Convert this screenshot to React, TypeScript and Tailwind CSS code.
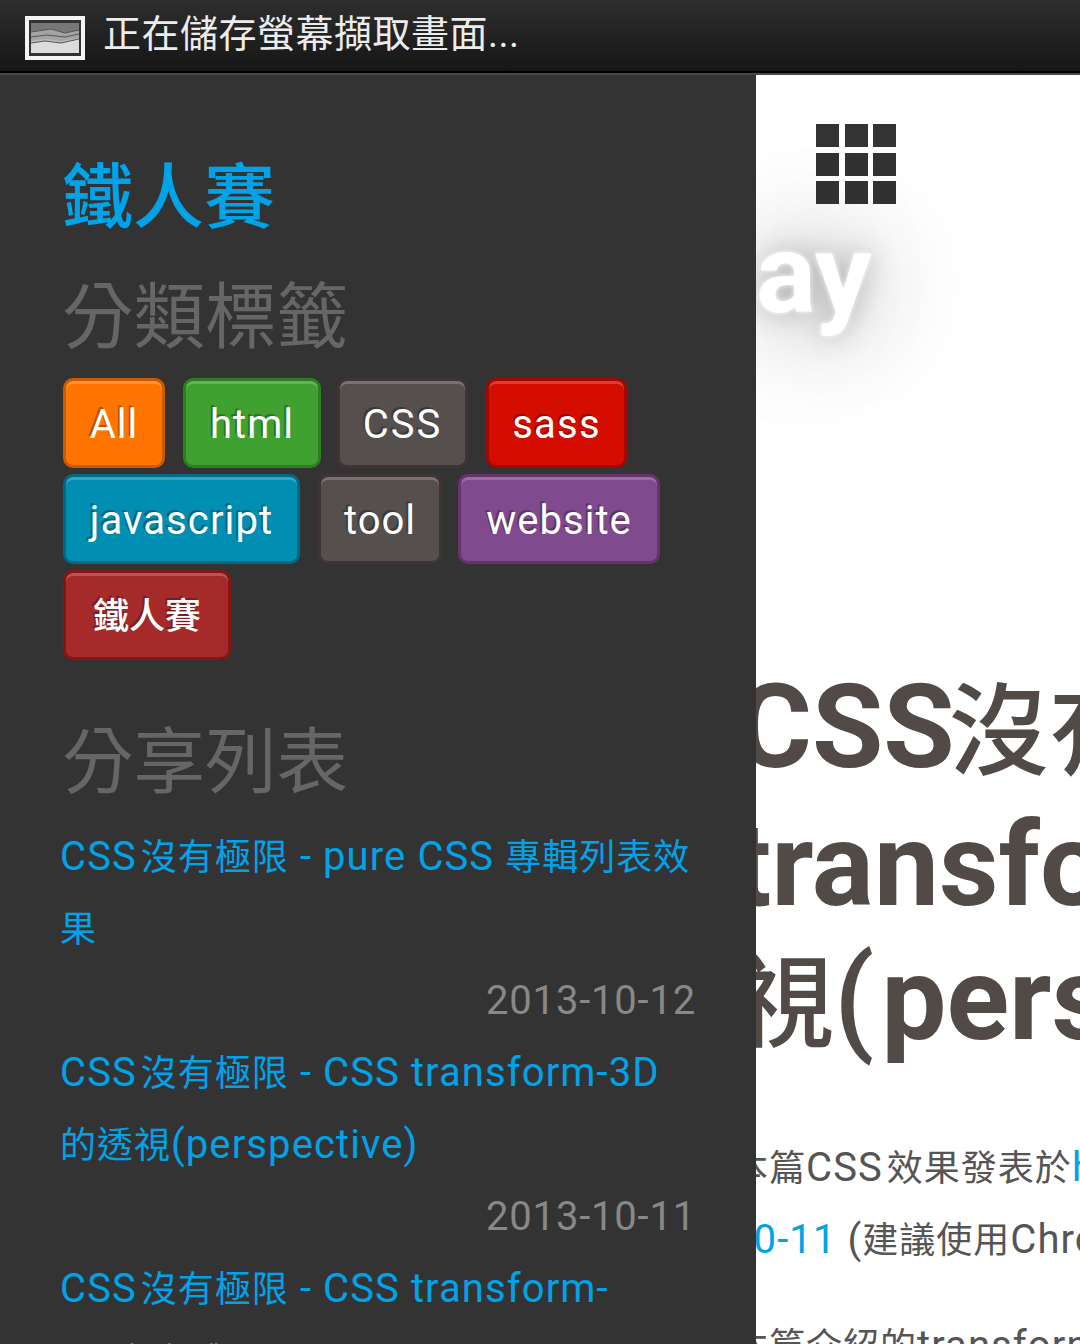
const font = { fontFamily: 'Roboto, "Noto Sans CJK TC", sans-serif' };

const tags = [
  { label: 'All', cls: 'w-[102px] bg-[#ff7500] border-[#c95c00] text-[40px] tracking-[1px]' },
  { label: 'html', cls: 'w-[138px] bg-[#3fa12f] border-[#2c7f1e] text-[40px] tracking-[1px]' },
  { label: 'CSS', cls: '-ml-[2px] w-[131px] bg-[#55504d] border-[#423436] text-[40px] tracking-[2px]' },
  { label: 'sass', cls: 'w-[141px] bg-[#d40d00] border-[#a00800] text-[40px] tracking-[1.2px]' },
  { label: 'javascript', cls: 'w-[237px] bg-[#008fb3] border-[#006a86] text-[40px] tracking-[1.1px]' },
  { label: 'tool', cls: 'w-[124px] bg-[#55504d] border-[#423436] text-[40px] tracking-[1px]' },
  { label: 'website', cls: '-ml-[2px] w-[202px] bg-[#7f4a8e] border-[#68326f] text-[40px] tracking-[1px]' },
  { label: '鐵人賽', cls: 'w-[168px] bg-[#a62a2a] border-[#861515] text-[36px] font-medium' },
];

const posts = [
  { lines: ['CSS沒有極限 - pure CSS 專輯列表效', '果'], date: '2013-10-12' },
  { lines: ['CSS沒有極限 - CSS transform-3D', '的透視(perspective)'], date: '2013-10-11' },
  { lines: ['CSS沒有極限 - CSS transform-', '3D立方體'], date: '' },
];

// Latin and CJK run at different sizes in the screenshot
const Mixed = ({ text, latin, cjk, gap = '' }: { text: string; latin: string; cjk: string; gap?: string }) => {
  const parts = text.split(/([\u3000-\u9fff]+)/);
  return (
    <>
      {parts.map((part, i) => {
        if (i % 2 === 0) {
          return (
            <span key={i} className={latin}>
              {part}
            </span>
          );
        }
        const afterWord = parts[i - 1] !== '' && !parts[i - 1].endsWith(' ');
        return (
          <span key={i} className={`${cjk} ${afterWord ? gap : ''}`}>
            {part}
          </span>
        );
      })}
    </>
  );
};

const StatusIcon = () => (
  <svg width="60" height="44" viewBox="0 0 60 44" className="shrink-0">
    <rect x="0" y="0" width="60" height="44" fill="#f4f4f4" />
    <rect x="4" y="4" width="52" height="36" fill="#333" />
    <rect x="6" y="7" width="48" height="30" fill="#bbb" />
    <path d="M6 7h48v7l-14 3-14-4-20 3z" fill="#777" />
    <path d="M6 16l20-3 14 4 14-3v8l-18 3-16-2-14 2z" fill="#a4a4a4" />
    <path d="M6 27l14-2 16 2 18-4v14H6z" fill="#dcdcdc" />
    <path d="M6 16l20-3 14 4 14-3M6 27l14-2 16 2 18-4M6 21l16-2 18 2 14-3" fill="none" stroke="#555" strokeWidth="1" />
  </svg>
);

const GridIcon = () => (
  <div className="grid w-[80px] grid-cols-3 gap-[5.5px]">
    {Array.from({ length: 9 }).map((_, i) => (
      <div key={i} className="h-[23px] w-[23px] bg-[#333]" />
    ))}
  </div>
);

const latinBody = 'text-[40px] tracking-[1.1px]';
const cjkBody = 'text-[36px] tracking-[1px]';
const latinHead = 'text-[116px]';
const cjkHead = 'text-[100px] font-medium';

export default function App() {
  return (
    <div className="flex h-[1344px] w-[1080px] flex-col overflow-hidden bg-[#333]" style={font}>
      <div className="flex h-[75px] shrink-0 flex-col">
        <div className="flex h-[71px] items-center bg-gradient-to-b from-[#2e2e2e] to-[#161616] pl-[25px]">
          <div className="mt-[5px]">
            <StatusIcon />
          </div>
          <span className="mb-[3px] ml-[18px] whitespace-nowrap text-[38px] leading-none tracking-[0.5px] text-[#ececec]">
            正在儲存螢幕擷取畫面...
          </span>
        </div>
        <div className="h-[2px] bg-black" />
        <div className="h-[2px] bg-[#484848]" />
      </div>

      <div className="flex min-h-0 flex-1">
        <aside className="w-[756px] shrink-0 overflow-hidden pl-[60px] pr-[60px] pt-[75px]">
          <h1 className="ml-[2px] text-[71px] font-medium leading-[96px] text-[#00a2e8]">鐵人賽</h1>
          <h2 className="ml-[2px] mt-[24px] text-[71.5px] font-normal leading-[96px] text-[#666]">分類標籤</h2>
          <div className="ml-[3px] mt-[12px] flex flex-wrap gap-x-[18px] gap-y-[6px]">
            {tags.map((t) => (
              <div
                key={t.label}
                className={`flex h-[90px] items-center justify-center rounded-[10px] border-[3px] pt-[3px] text-white shadow-[inset_0_3px_0_rgba(255,255,255,0.2)] [text-shadow:-2px_-2px_0_rgba(0,0,0,0.3)] ${t.cls}`}
              >
                {t.label}
              </div>
            ))}
          </div>
          <h2 className="ml-[2px] mt-[55px] text-[71.5px] font-normal leading-[96px] text-[#666]">分享列表</h2>
          <div className="mt-[10px] leading-[72px]">
            {posts.map((p, i) => (
              <div key={i}>
                {p.lines.map((l) => (
                  <div key={l} className="h-[72px] whitespace-nowrap text-[#00a2e8]">
                    <Mixed text={l} latin={latinBody} cjk={cjkBody} gap="pl-[4px]" />
                  </div>
                ))}
                {p.date && <div className="h-[72px] text-right text-[40px] tracking-[0.8px] text-[#888]">{p.date}</div>}
              </div>
            ))}
          </div>
        </aside>

        <main className="min-w-0 flex-1 overflow-hidden bg-white pl-[60px] pt-[49px]">
          <GridIcon />
          <div className="-ml-[60px] mt-[10px] h-[120px]">
            <div className="whitespace-nowrap text-[112px] font-bold leading-[120px] text-white [text-shadow:0_0_5px_#fff,0_0_28px_rgba(0,0,0,0.25),0_0_100px_rgba(0,0,0,0.5)]">
              ay
            </div>
          </div>
          <div className="-ml-[60px] mt-[326px] whitespace-nowrap font-bold leading-[134px] text-[#514a46]">
            <div className="-ml-[20px] h-[138px]">
              <Mixed text="CSS" latin={latinHead} cjk={cjkHead} />
              <span className={`${cjkHead} -ml-[6px]`}>沒有極限</span>
            </div>
            <div className="-ml-[24px] h-[134px]">
              <Mixed text="transform" latin={latinHead} cjk={cjkHead} />
            </div>
            <div className="-ml-[22px] h-[134px]">
              <span className={cjkHead}>視</span>
              <span className={`${latinHead} font-medium tracking-[7px]`}>(</span>
              <span className={latinHead}>perspective)</span>
            </div>
          </div>
          <div className="-ml-[60px] mt-[66px] whitespace-nowrap leading-[72px] text-[#555]">
            <div className="-ml-[24px] h-[72px]">
              <Mixed text="本篇CSS效果發表於" latin={latinBody} cjk={cjkBody} gap="pl-[4px]" />
              <span className={`text-[#00a2e8] ${latinBody}`}>http</span>
            </div>
            <div className="-ml-[26px] h-[72px]">
              <span className={`text-[#00a2e8] ${latinBody}`}>10-11</span>
              <Mixed text=" (建議使用Chrome)" latin={latinBody} cjk={cjkBody} />
            </div>
            <div className="-ml-[24px] mt-[34px] h-[72px]">
              <Mixed text="本篇介紹的transform" latin={latinBody} cjk={cjkBody} />
            </div>
          </div>
        </main>
      </div>
    </div>
  );
}
